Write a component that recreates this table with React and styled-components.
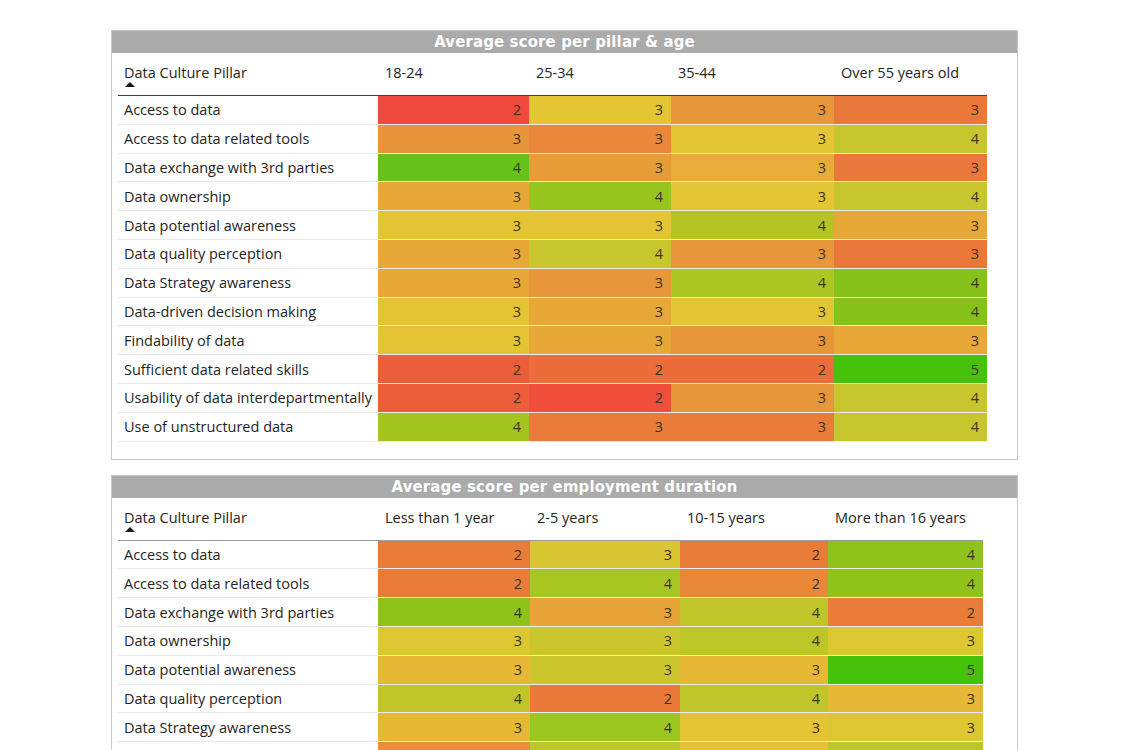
import React from "react";
import styled, { createGlobalStyle } from "styled-components";

const GlobalStyle = createGlobalStyle`
  body {
    margin: 0;
    background: #ffffff;
    font-family: "Open Sans", "Noto Sans", sans-serif;
    color: #252423;
  }
`;

const pillars = [
  "Access to data",
  "Access to data related tools",
  "Data exchange with 3rd parties",
  "Data ownership",
  "Data potential awareness",
  "Data quality perception",
  "Data Strategy awareness",
  "Data-driven decision making",
  "Findability of data",
  "Sufficient data related skills",
  "Usability of data interdepartmentally",
  "Use of unstructured data",
];

// each cell: [value, colour]
const ageData = [
  [[2, "#ef4a3c"], [3, "#e4c634"], [3, "#e8963a"], [3, "#ea783a"]],
  [[3, "#e8943a"], [3, "#ea873a"], [3, "#e4c634"], [4, "#c8c62e"]],
  [[4, "#66c21a"], [3, "#e89c38"], [3, "#e8ac38"], [3, "#ea783a"]],
  [[3, "#e8a838"], [4, "#98c41e"], [3, "#e4c634"], [4, "#c8c62e"]],
  [[3, "#e4c434"], [3, "#e4c434"], [4, "#b4c424"], [3, "#e8a838"]],
  [[3, "#e8a838"], [4, "#c8c62e"], [3, "#e8963a"], [3, "#ea783a"]],
  [[3, "#e8a838"], [3, "#e8963a"], [4, "#acc624"], [4, "#86c21a"]],
  [[3, "#e4c434"], [3, "#e8a838"], [3, "#e4c434"], [4, "#86c21a"]],
  [[3, "#e4c434"], [3, "#e8a838"], [3, "#e8963a"], [3, "#e8a838"]],
  [[2, "#ec5e3a"], [2, "#ec6c3a"], [2, "#ec6c3a"], [5, "#46c20a"]],
  [[2, "#ec5e3a"], [2, "#ee4e3a"], [3, "#e8963a"], [4, "#c8c62e"]],
  [[4, "#a4c420"], [3, "#ea7c3a"], [3, "#ea7c3a"], [4, "#c8c62e"]],
];

const durationData = [
  [[2, "#ea7c3a"], [3, "#d8c632"], [2, "#ea7c3a"], [4, "#90c21c"]],
  [[2, "#ea7c3a"], [4, "#a8c622"], [2, "#ea883a"], [4, "#90c21c"]],
  [[4, "#90c21c"], [3, "#e8a438"], [4, "#c0c62a"], [2, "#ea7c3a"]],
  [[3, "#dcc632"], [3, "#ccc62e"], [4, "#bcc628"], [3, "#dcc632"]],
  [[3, "#e6b836"], [3, "#ccc62e"], [3, "#e6b836"], [5, "#46c20a"]],
  [[4, "#c0c62a"], [2, "#ea7838"], [4, "#c0c62a"], [3, "#e6b836"]],
  [[3, "#e6b836"], [4, "#9cc620"], [3, "#e4c434"], [3, "#dcc632"]],
  [[2, "#ea8c3a"], [4, "#bcc628"], [3, "#e4c434"], [4, "#bcc628"]],
  [[3, "#e6b836"], [3, "#e4c434"], [3, "#e8a838"], [3, "#dcc632"]],
  [[2, "#ea7c3a"], [3, "#e8a838"], [2, "#ec6c3a"], [4, "#a8c622"]],
  [[2, "#ec6c3a"], [3, "#e4c434"], [3, "#e8a838"], [4, "#bcc628"]],
  [[3, "#e4c434"], [3, "#e6b836"], [4, "#c0c62a"], [4, "#9cc620"]],
];

const Page = styled.div`
  display: flex;
  flex-direction: column;
  gap: 15px;
  padding: 30px 0 0 111px;
  width: 907px;
`;

const Panel = styled.section`
  border: 1px solid #c8c8c8;
  background: #ffffff;
  padding-bottom: ${(p) => p.$bottom || 17}px;
`;

const TitleBar = styled.div`
  height: 22px;
  line-height: 22px;
  background: #ababab;
  color: #ffffff;
  text-align: center;
  font-family: "DejaVu Sans Condensed", "DejaVu Sans", sans-serif;
  font-weight: bold;
  font-size: 16.5px;
  letter-spacing: 0.2px;
`;

const Table = styled.div`
  width: max-content;
  padding: 0 6px;
`;

const HeadRow = styled.div`
  display: grid;
  grid-template-columns: ${(p) => p.$cols};
  height: 42px;
  border-bottom: 1px solid ${(p) => p.$line};
`;

const HeadCell = styled.div`
  position: relative;
  padding: 10px 0 0 ${(p) => (p.$first ? 6 : 7)}px;
  font-size: 14.5px;
  white-space: nowrap;
`;

const SortArrow = styled.span`
  position: absolute;
  left: 7px;
  top: 29px;
  width: 0;
  height: 0;
  border-left: 5px solid transparent;
  border-right: 5px solid transparent;
  border-bottom: 5px solid #1a1a1a;
`;

const Row = styled.div`
  display: grid;
  grid-template-columns: ${(p) => p.$cols};
  height: 28.8px;
  box-sizing: border-box;
  border-bottom: 1px solid #ebebeb;
`;

const Label = styled.div`
  display: flex;
  align-items: center;
  padding-left: 6px;
  font-size: 14.5px;
  white-space: nowrap;
`;

const Cell = styled.div`
  display: flex;
  align-items: center;
  justify-content: flex-end;
  padding-right: 8px;
  background: ${(p) => p.$bg};
  color: #3b3422;
  font-size: 14.5px;
`;

const Matrix = ({ title, headers, cols, data, line, bottom }) => (
  <Panel $bottom={bottom}>
    <TitleBar>{title}</TitleBar>
    <Table>
      <HeadRow $cols={cols} $line={line}>
        <HeadCell $first>
          Data Culture Pillar
          <SortArrow />
        </HeadCell>
        {headers.map((h) => (
          <HeadCell key={h}>{h}</HeadCell>
        ))}
      </HeadRow>
      {pillars.map((p, i) => (
        <Row key={p} $cols={cols}>
          <Label>{p}</Label>
          {data[i].map(([v, c], j) => (
            <Cell key={j} $bg={c}>
              {v}
            </Cell>
          ))}
        </Row>
      ))}
    </Table>
  </Panel>
);

export default function App() {
  return (
    <>
      <GlobalStyle />
      <Page>
        <Matrix
          title="Average score per pillar & age"
          headers={["18-24", "25-34", "35-44", "Over 55 years old"]}
          cols="260px 151px 142px 163px 153px"
          data={ageData}
          line="#34494f"
          bottom={17}
        />
        <Matrix
          title="Average score per employment duration"
          headers={["Less than 1 year", "2-5 years", "10-15 years", "More than 16 years"]}
          cols="260px 152px 150px 148px 155px"
          data={durationData}
          line="#9a9a9a"
          bottom={17}
        />
      </Page>
    </>
  );
}
